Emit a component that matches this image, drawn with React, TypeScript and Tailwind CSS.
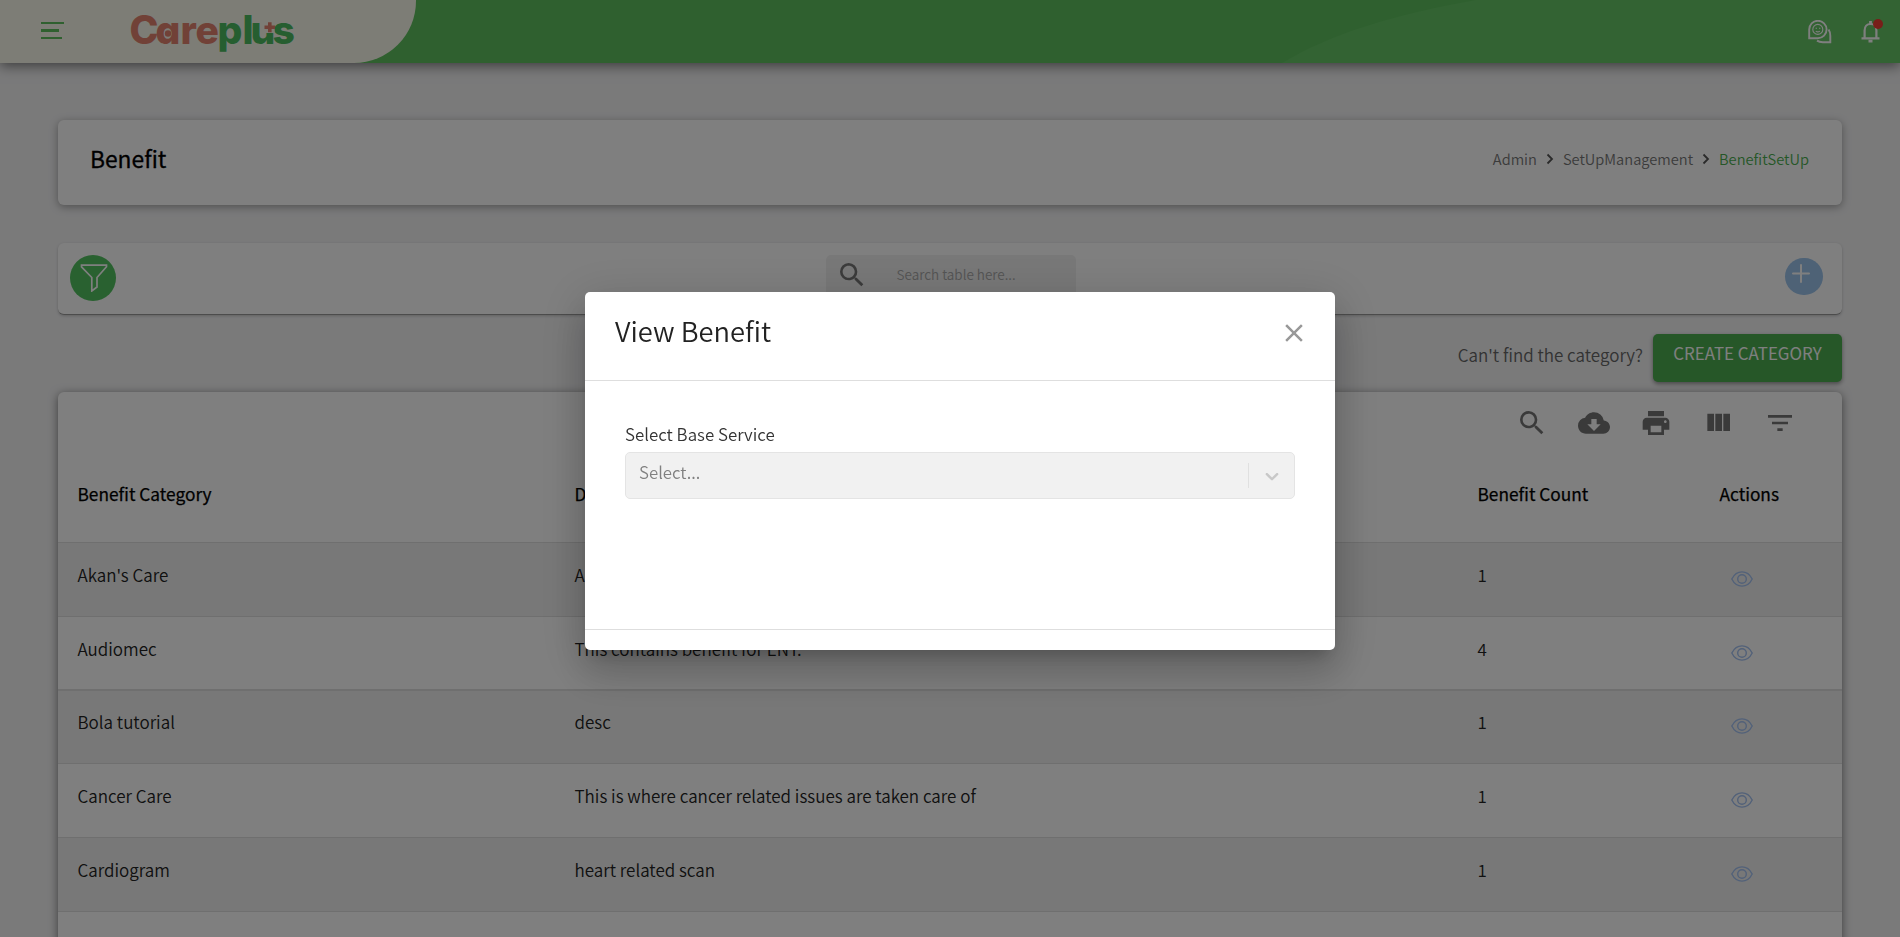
import type { ReactNode } from 'react';
import { MdClose, MdCloudDownload, MdFilterList, MdPrint, MdSearch } from 'react-icons/md';

type Row = { name: string; desc: string; count: number; box: string };

const rows: Row[] = [
  { name: "Akan's Care", desc: 'Akan care benefits', count: 1, box: 'h-[74px] border-b pt-5 bg-[#f1f1f1]' },
  { name: 'Audiomec', desc: 'This contains benefit for ENT.', count: 4, box: 'h-[74px] border-b-2 pt-5' },
  { name: 'Bola tutorial', desc: 'desc', count: 1, box: 'h-[73px] border-b pt-[19px] bg-[#f1f1f1]' },
  { name: 'Cancer Care', desc: 'This is where cancer related issues are taken care of', count: 1, box: 'h-[74px] border-b pt-5' },
  { name: 'Cardiogram', desc: 'heart related scan', count: 1, box: 'h-[74px] border-b pt-5 bg-[#f1f1f1]' },
];

const columns = 'grid grid-cols-[497px_903px_242px_1fr] pl-[19.5px]';

function Logo() {
  return (
    <svg width="180" height="56" viewBox="120 5 180 56" className="block">
      <text
        y="44"
        x="129.5 155.5 180.5 195.5 217.5 242.5 250.500 272.500"
        className="text-[39px] font-extrabold [font-family:Inter,sans-serif] [font-feature-settings:'cv11']"
        fill="#e2836f"
      >
        Care<tspan fill="#4cbc60">plus</tspan>
      </text>
      <circle cx="168" cy="33.5" r="3.2" fill="#e2836f" />
      <rect x="264" y="20" width="10.500" height="13" fill="#fafaec" />
      <path d="M264.500 27.200h10.500M269.800 22.200v10" stroke="#e2836f" strokeWidth="3.6" />
    </svg>
  );
}

function ChatIcon() {
  return (
    <svg width="24" height="24" viewBox="0 0 24 24" fill="none" stroke="#fff" strokeWidth="1.9">
      <path d="M1.2 18.2V9.6a8.7 8.7 0 1 1 8.700 8.600z" />
      <circle cx="9.8" cy="9.4" r="5" strokeWidth="1.1" />
      <path d="M7.6 8.200h1.400M11 8.200h1.400M7.800 11.200c1.200.8 2.800.8 4 0" strokeWidth="1.1" />
      <path d="M20.600 9.500c1.300 2 1.800 4 1.700 6.200v6.500h-7.500c-2.500 0-4.200-.5-5.800-1.600" />
    </svg>
  );
}

function BellIcon() {
  return (
    <svg width="27" height="27" viewBox="0 0 27 27" fill="none" stroke="#fff" strokeWidth="2.2">
      <path d="M4.500 20.400h18M7.600 20V12.500c0-4 2.400-6.500 5.900-6.500s5.900 2.500 5.900 6.500V20" />
      <path d="M13.500 3v3M11.500 23.200h4" strokeWidth="2.8" />
    </svg>
  );
}

function EyeIcon() {
  return (
    <svg width="22" height="16" viewBox="0 0 22 16" fill="none" stroke="#a4c2f2" strokeWidth="1.4">
      <path d="M.8 8C3.200 3.200 6.800.9 11 .9S18.800 3.200 21.200 8C18.800 12.800 15.200 15.100 11 15.100S3.200 12.800.8 8z" />
      <circle cx="11" cy="8" r="4.3" />
    </svg>
  );
}

function Crumb({ children }: { children: ReactNode }) {
  return <span className="text-[#777]">{children}</span>;
}

function CrumbArrow() {
  return (
    <svg width="8" height="12" viewBox="0 0 8 12" fill="none" stroke="#555" strokeWidth="1.8">
      <path d="M1.500 1.500L6 6l-4.500 4.500" />
    </svg>
  );
}

function Header() {
  return (
    <header className="relative flex h-[63px] justify-between overflow-hidden bg-[#5ec05e]">
      <svg className="absolute inset-y-0 right-0" width="620" height="63" viewBox="1280 0 620 63">
        <path d="M1282 63C1330 34 1395 14 1476 0H1900V63z" fill="#66c666" />
      </svg>
      <div className="relative flex w-[416px] items-start rounded-br-[62px] bg-[#fafaec] pl-[41px]">
        <div className="mt-[22px] flex w-[23px] flex-col">
          <span className="h-[2px] w-[23px] bg-[#5ec05e]" />
          <span className="mt-[5px] h-[3px] w-[18px] bg-[#5ec05e]" />
          <span className="mt-[5px] h-[2px] w-[21px] bg-[#5ec05e]" />
        </div>
        <div className="ml-[56px] mt-[5px]">
          <Logo />
        </div>
      </div>
      <div className="relative flex items-start pr-4">
        <div className="mr-[25px] mt-5">
          <ChatIcon />
        </div>
        <div className="relative mt-[18px]">
          <BellIcon />
          <span className="absolute left-4 top-[1px] size-[10px] rounded-full bg-[#f03c32]" />
        </div>
      </div>
    </header>
  );
}

function Modal() {
  return (
    <div className="fixed inset-0 flex items-start justify-center bg-black/50 pl-5 pt-[292px]">
      <section className="flex h-[358px] w-[750px] flex-col overflow-hidden rounded-[5px] bg-white shadow-[0_11px_15px_-7px_rgba(0,0,0,0.2),0_24px_38px_3px_rgba(0,0,0,0.14),0_9px_46px_8px_rgba(0,0,0,0.12)]">
        <div className="flex h-[89px] items-start justify-between border-b border-[#dedede] pl-[30px] pr-[26px] text-[#222]">
          <h2 className="mt-[18px] text-[27.3px] leading-[40px] font-[350]">View Benefit</h2>
          <MdClose size={30} className="mt-[26px] text-[#999]" />
        </div>
        <div className="flex h-[249px] flex-col border-b border-[#dedede] px-10 pt-[41px]">
          <label className="text-[16.900px] text-[#333]">Select Base Service</label>
          <div className="mt-[6px] flex h-[47px] items-center rounded-[5px] border border-[#e4e4e4] bg-[#f1f1f1] pl-[13px]">
            <span className="-mt-[7px] grow text-[16.800px] text-[#808080]">Select...</span>
            <span className="h-[25px] w-px bg-[#e0e0e0]" />
            <svg width="22" height="22" viewBox="0 0 20 20" fill="#c8c8c8" className="mx-[11.5px]">
              <path d="M4.516 7.548c0.436-0.446 1.043-0.481 1.576 0l3.908 3.747 3.908-3.747c0.533-0.481 1.141-0.446 1.574 0 0.436 0.445 0.408 1.197 0 1.615-0.406 0.418-4.695 4.502-4.695 4.502-0.217 0.223-0.502 0.335-0.787 0.335s-0.570-0.112-0.789-0.335c0 0-4.287-4.084-4.695-4.502s-0.436-1.170 0-1.615z" />
            </svg>
          </div>
        </div>
      </section>
    </div>
  );
}

export default function App() {
  return (
    <div className="h-[937px] overflow-hidden bg-[#f4f4f5] text-[17px] font-[350] leading-6 text-[#222] [font-family:'Noto_Sans_CJK_SC',sans-serif]">
      <div className="relative shadow-[0_3px_12px_rgba(0,0,0,0.5)]">
        <Header />
      </div>

      <main className="px-[58px] pt-[57px]">
        <section className="flex h-[85px] items-start justify-between rounded-[6px] bg-white pl-8 pr-[33px] shadow-[0_2px_8px_rgba(0,0,0,0.35)]">
          <h1 className="mt-[21px] text-[22.8px] font-normal leading-9 text-black [-webkit-text-stroke:0.3px]">Benefit</h1>
          <nav className="mt-[27px] flex items-center gap-[9px] text-[14.65px] leading-6">
            <Crumb>Admin</Crumb>
            <CrumbArrow />
            <Crumb>SetUpManagement</Crumb>
            <CrumbArrow />
            <span className="text-[#4caf50]">BenefitSetUp</span>
          </nav>
        </section>

        <section className="mt-[38px] flex h-[72px] items-start justify-between rounded-[6px] border-b border-[#999] bg-white pl-3 pr-[19px] shadow-[0_1px_3px_rgba(0,0,0,0.2)]">
          <div className="mt-3 flex size-[46px] items-center justify-center rounded-full bg-[#52c260] pl-[2px]">
            <svg width="28" height="28" viewBox="0 0 28 28" fill="none" stroke="#fff" strokeWidth="1.7">
              <path d="M1.500 1.200h25v1.600L17 13.500v9.500l-5.200 4V13.500L1.500 2.800z" />
            </svg>
          </div>
          <div className="mt-3 flex h-[46px] w-[250px] items-start rounded-[5px] bg-[#f1f1f1] pl-[10px] text-[#777]">
            <MdSearch size={32} className="mt-[4px]" />
            <span className="ml-[29px] mt-[7px] text-[13.5px] text-[#aaa]">Search table here...</span>
          </div>
          <div className="mt-[15px] flex h-[37px] w-[38px] items-start rounded-full bg-[#9cc4ec] pl-[7px] pt-[6px]">
            <svg width="18" height="19" viewBox="0 0 18 19" stroke="#fff" strokeWidth="2" strokeLinecap="round">
              <path d="M1 9.500h16M9 1v17" />
            </svg>
          </div>
        </section>

        <div className="mt-[19px] flex items-start justify-end">
          <span className="mr-[10px] mt-[9px] text-[#666]">Can't find the category?</span>
          <button className="flex h-12 w-[189px] justify-center rounded-[5px] bg-[#4caf50] pt-[7px] text-[16.9px] font-normal text-white shadow-[0_2px_4px_rgba(0,0,0,0.4)]">
            CREATE CATEGORY
          </button>
        </div>

        <section className="mt-[10px] h-[600px] rounded-t-[6px] bg-white shadow-[0_2px_10px_rgba(0,0,0,0.5)]">
          <div className="flex h-[90px] items-start justify-end gap-[30px] pr-[46px] pt-[15px] text-[#757575]">
            <MdSearch size={32} />
            <MdCloudDownload size={32} />
            <MdPrint size={32} />
            <svg width="32" height="32" viewBox="0 0 24 24" fill="currentColor">
              <path d="M10 18h5V5h-5v13zm-6 0h5V5H4v13zM16 5v13h5V5h-5z" />
            </svg>
            <MdFilterList size={32} />
          </div>
          <div className={`${columns} h-[61px] items-start border-b border-[#dedede] text-[17.3px] font-normal text-black [-webkit-text-stroke:0.25px]`}>
            <span>Benefit Category</span>
            <span>Description</span>
            <span>Benefit Count</span>
            <span>Actions</span>
          </div>
          {rows.map((r) => (
            <div key={r.name} className={`${columns} items-start border-[#dedede] ${r.box}`}>
              <span>{r.name}</span>
              <span>{r.desc}</span>
              <span>{r.count}</span>
              <span className="pl-[11px] pt-[8px]">
                <EyeIcon />
              </span>
            </div>
          ))}
        </section>
      </main>

      <Modal />
    </div>
  );
}
